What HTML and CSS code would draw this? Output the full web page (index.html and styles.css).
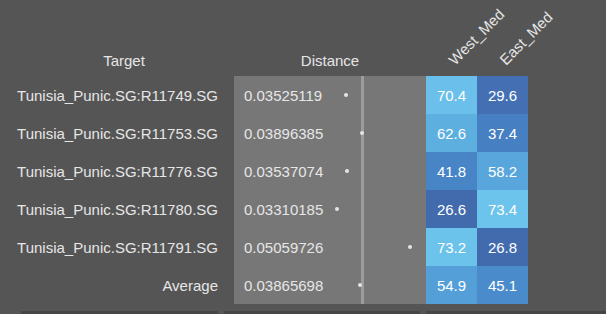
FILE: index.html
```html
<!DOCTYPE html>
<html>
<head>
<meta charset="utf-8">
<link rel="stylesheet" href="styles.css">
</head>
<body>
<div class="table">
  <div class="h h-target">Target</div>
  <div class="h h-dist">Distance</div>
  <div class="h h-pop"><span class="rot">West_Med</span></div>
  <div class="h h-pop"><span class="rot">East_Med</span></div>
  <div class="h"></div>

  <div class="panel"><div class="refline"></div></div>

  <div class="label r1">Tunisia_Punic.SG:R11749.SG</div>
  <div class="dist r1"><span>0.03525119</span><i class="dot" style="left:112px"></i></div>
  <div class="cell c1 r1" style="background:#6ac0ea">70.4</div>
  <div class="cell c2 r1" style="background:#4470b3">29.6</div>

  <div class="label r2">Tunisia_Punic.SG:R11753.SG</div>
  <div class="dist r2"><span>0.03896385</span><i class="dot" style="left:128px"></i></div>
  <div class="cell c1 r2" style="background:#5dafe0">62.6</div>
  <div class="cell c2 r2" style="background:#4680c3">37.4</div>

  <div class="label r3">Tunisia_Punic.SG:R11776.SG</div>
  <div class="dist r3"><span>0.03537074</span><i class="dot" style="left:113px"></i></div>
  <div class="cell c1 r3" style="background:#4785c7">41.8</div>
  <div class="cell c2 r3" style="background:#58a6dc">58.2</div>

  <div class="label r4">Tunisia_Punic.SG:R11780.SG</div>
  <div class="dist r4"><span>0.03310185</span><i class="dot" style="left:103px"></i></div>
  <div class="cell c1 r4" style="background:#426bae">26.6</div>
  <div class="cell c2 r4" style="background:#6cc3eb">73.4</div>

  <div class="label r5">Tunisia_Punic.SG:R11791.SG</div>
  <div class="dist r5"><span>0.05059726</span><i class="dot" style="left:176px"></i></div>
  <div class="cell c1 r5" style="background:#6bc2ea">73.2</div>
  <div class="cell c2 r5" style="background:#426bae">26.8</div>

  <div class="label r6">Average</div>
  <div class="dist r6"><span>0.03865698</span><i class="dot" style="left:126px"></i></div>
  <div class="cell c1 r6" style="background:#559fd8">54.9</div>
  <div class="cell c2 r6" style="background:#4a8ccb">45.1</div>
</div>
<div class="footer">
  <div class="seg s1"></div>
  <div class="seg s2"></div>
  <div class="seg s3"></div>
</div>
</body>
</html>
```

FILE: styles.css
```css
html, body {
  margin: 0;
  padding: 0;
  background: #555555;
  font-family: "Liberation Sans", Arial, sans-serif;
  font-size: 15px;
  color: #e6e6e6;
  overflow: hidden;
}

.table {
  display: grid;
  grid-template-columns: 234px 192px 51px 51px 1fr;
  grid-template-rows: 76px repeat(6, 38px);
}

.h {
  grid-row: 1;
  display: flex;
  align-items: flex-end;
  padding-bottom: 7px;
  box-sizing: border-box;
  line-height: 17px;
}

.h-target {
  grid-column: 1;
  justify-content: center;
  padding-left: 14px;
}

.h-dist {
  grid-column: 2;
  justify-content: center;
}

.h-pop {
  position: relative;
}

.rot {
  position: absolute;
  left: 31px;
  bottom: 8px;
  transform-origin: left bottom;
  transform: rotate(-45deg);
  white-space: nowrap;
  line-height: 17px;
}

.panel {
  grid-column: 2;
  grid-row: 2 / span 6;
  background: #777777;
  position: relative;
}

.refline {
  position: absolute;
  left: 127px;
  top: 0;
  bottom: 0;
  width: 3px;
  background: #9c9c9c;
}

.label {
  grid-column: 1;
  display: flex;
  align-items: center;
  justify-content: flex-end;
  padding-right: 16px;
  white-space: nowrap;
}

.dist {
  grid-column: 2;
  position: relative;
  display: flex;
  align-items: center;
  padding-left: 10px;
  z-index: 1;
}

.dot {
  position: absolute;
  top: 17px;
  width: 4px;
  height: 4px;
  margin-left: -2px;
  border-radius: 50%;
  background: #e4e4e4;
}

.cell {
  display: flex;
  align-items: center;
  justify-content: center;
  color: #ffffff;
}

.c1 { grid-column: 3; }
.c2 { grid-column: 4; }

.r1 { grid-row: 2; }
.r2 { grid-row: 3; }
.r3 { grid-row: 4; }
.r4 { grid-row: 5; }
.r5 { grid-row: 6; }
.r6 { grid-row: 7; }

.footer {
  display: grid;
  grid-template-columns: 21px 197px 6px 196px 6px 1fr;
  margin-top: 7px;
  height: 10px;
}

.seg {
  background: #464646;
}

.s1 { grid-column: 2; }
.s2 { grid-column: 4; }
.s3 { grid-column: 6; }
```
